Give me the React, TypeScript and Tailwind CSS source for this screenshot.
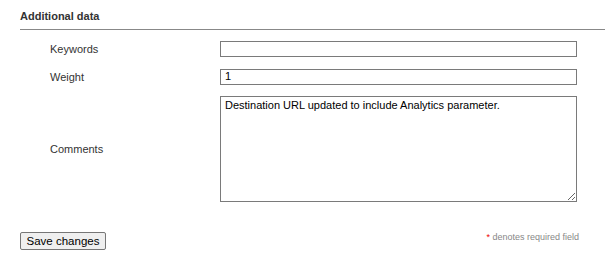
const App = () => {
  return (
    <div className="w-[605px] h-[264px] bg-white font-['Liberation_Sans',Arial,sans-serif] text-[11px] text-[#333]">
      <div className="pl-5 pt-[10px]">
        <h2 className="font-bold text-[11px] leading-[13px] text-[#333] pb-[6px] border-b border-[#888]">
          Additional data
        </h2>
      </div>

      <div className="grid grid-cols-[170px_357px] gap-y-[11px] pl-[50px] pt-[11px]">
        <label className="flex items-center">Keywords</label>
        <input
          type="text"
          className="h-4 border border-[#7a7a7a] bg-white px-1 text-[11px] text-black outline-none"
        />

        <label className="flex items-center">Weight</label>
        <input
          type="text"
          defaultValue="1"
          className="h-4 border border-[#7a7a7a] bg-white px-1 text-[11px] text-black outline-none"
        />

        <label className="flex items-center">Comments</label>
        <textarea
          defaultValue="Destination URL updated to include Analytics parameter."
          className="h-[106px] border border-[#7a7a7a] bg-white px-1 py-[2px] text-[11px] leading-[13px] text-black outline-none resize"
        />
      </div>

      <div className="flex items-center justify-between pl-5 pr-[26px] pt-[30px]">
        <button className="h-[18px] w-[86px] rounded-[2px] border border-[#767676] bg-[#efefef] text-[11.5px] leading-[15px] text-black">
          Save changes
        </button>
        <p className="text-[9px] text-[#888] -mt-[7px]">
          <span className="text-[#e00]">*</span> denotes required field
        </p>
      </div>
    </div>
  );
};

export default App;
